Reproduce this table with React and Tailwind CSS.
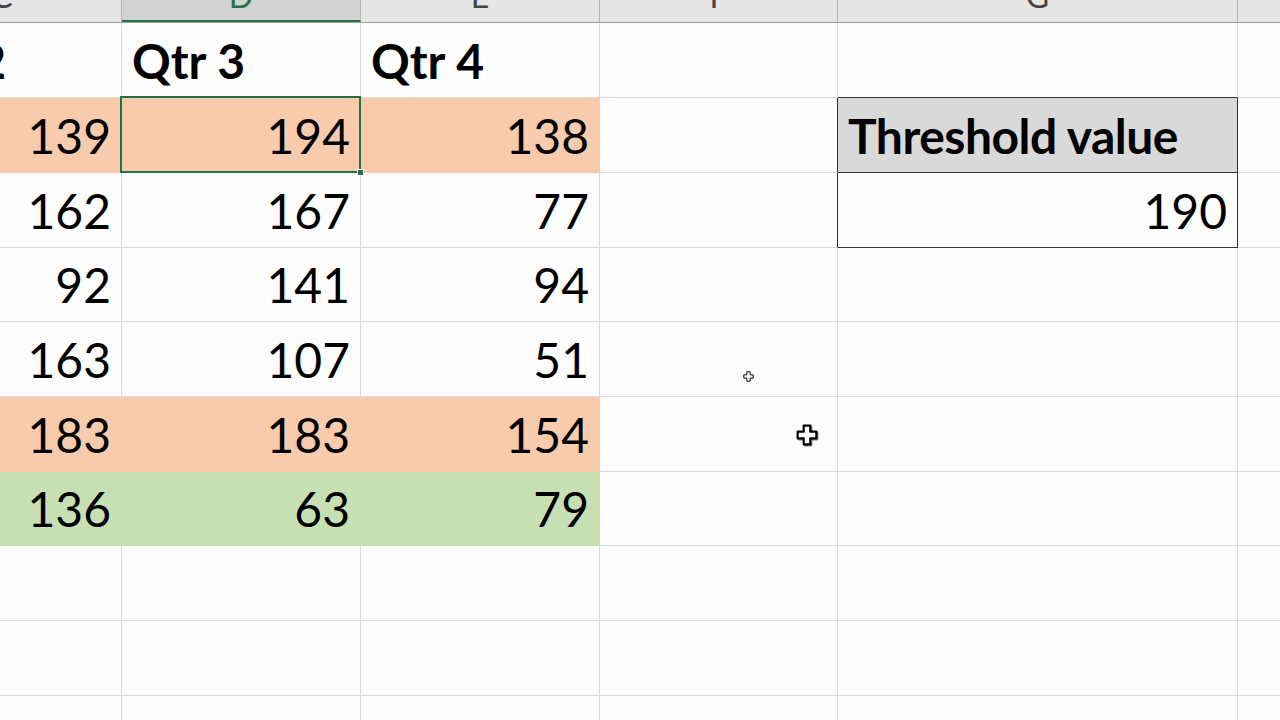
import React from 'react'

const cols = [
  { key: 'C', w: 'w-[239px]' },
  { key: 'D', w: 'w-[239px]' },
  { key: 'E', w: 'w-[239px]' },
  { key: 'F', w: 'w-[238px]' },
  { key: 'G', w: 'w-[400px]' },
  { key: 'H', w: 'w-[240px]' },
]

const rows = [
  { h: 'h-[75px]', vals: ['Qtr 2', 'Qtr 3', 'Qtr 4'], head: true },
  { h: 'h-[75px]', vals: [139, 194, 138], fill: 'bg-[#f8cbad] border-[#f8cbad]' },
  { h: 'h-[75px]', vals: [162, 167, 77] },
  { h: 'h-[74px]', vals: [92, 141, 94] },
  { h: 'h-[75px]', vals: [163, 107, 51] },
  { h: 'h-[75px]', vals: [183, 183, 154], fill: 'bg-[#f8cbad] border-[#f8cbad]' },
  { h: 'h-[74px]', vals: [136, 63, 79], fill: 'bg-[#c6e0b4] border-[#c6e0b4]' },
  { h: 'h-[75px]' },
  { h: 'h-[75px]' },
  { h: 'h-[75px]' },
  { h: 'h-[75px]' },
]

// the plus-shaped Excel cell cursor
const CellCursor = ({ size, stroke, className }) => (
  <svg width={size} height={size} viewBox="0 0 20 20" className={className}>
    <path
      d="M7 1.5 H13 V7 H18.5 V13 H13 V18.5 H7 V13 H1.5 V7 H7 Z"
      fill="#fff"
      stroke="#000"
      strokeWidth={stroke}
      strokeLinejoin="round"
    />
  </svg>
)

const App = () => {
  return (
    <div className="relative w-[1280px] h-[720px] overflow-hidden bg-[#fdfdfd] font-['Lato','Liberation_Sans',sans-serif] text-black">
      <div className="-ml-[117px] flex flex-col">
        {/* column letters, cut at the top like the zoomed sheet */}
        <div className="flex h-[23px] border-b border-[#a0a0a0] bg-[#e6e6e6] overflow-hidden">
          {cols.map((c) => {
            const sel = c.key === 'D'
            return (
              <div
                key={c.key}
                className={`${c.w} shrink-0 h-full flex justify-center border-r border-[#b4b4b4] overflow-hidden ${
                  sel ? 'bg-[#d2d2d2] border-b-2 border-b-[#217346] text-[#217346]' : 'text-[#444]'
                }`}
              >
                <span className="-mt-[20px] text-[32px] leading-[32px]">{c.key}</span>
              </div>
            )
          })}
        </div>

        {rows.map((r, ri) => (
          <div key={ri} className={`flex ${r.h}`}>
            {cols.map((c, ci) => {
              const val = r.vals && ci < 3 ? r.vals[ci] : null
              const filled = r.fill && ci < 3
              const selected = ri === 1 && ci === 1
              let extra = 'border-[#dadada]'
              let justify = 'justify-end'
              let content = null

              if (filled) extra = r.fill
              if (c.key === 'F' && (ri === 1 || ri === 2)) extra = 'border-b-[#dadada] border-r-[#333]'
              if (c.key === 'G' && ri === 0) extra = 'border-r-[#dadada] border-b-[#333]'
              if (c.key === 'G' && ri === 1) {
                extra = 'border-[#333] bg-[#d9d9d9]'
                justify = 'justify-start'
                content = <span className="pl-[10px] text-[48px] leading-none font-bold tracking-[-0.5px]">Threshold value</span>
              }
              if (c.key === 'G' && ri === 2) {
                extra = 'border-[#333]'
                content = <span className="pr-[10px] text-[48px] leading-none">190</span>
              }

              if (val !== null) {
                if (r.head) justify = 'justify-start'
                content = r.head ? (
                  <span className="pl-[10px] text-[48px] leading-none font-bold">{val}</span>
                ) : (
                  <span className="pr-[10px] text-[48px] leading-none">{val}</span>
                )
              }

              return (
                <div
                  key={c.key}
                  className={`relative ${c.w} shrink-0 flex items-end pb-[12px] border-r border-b ${justify} ${extra} ${
                    selected ? 'z-10' : ''
                  }`}
                >
                  {content}
                  {selected && (
                    <>
                      <div className="absolute -top-[2px] -left-[2px] -right-[1px] -bottom-[1px] border-2 border-[#217346] pointer-events-none" />
                      <div className="absolute -right-[4px] -bottom-[4px] w-[7px] h-[7px] bg-[#217346] border border-white" />
                    </>
                  )}
                </div>
              )
            })}
          </div>
        ))}
      </div>

      <CellCursor size={11} stroke={1.8} className="absolute left-[743px] top-[371px]" />
      <CellCursor size={22} stroke={2} className="absolute left-[796px] top-[424px] drop-shadow-[1px_1px_0_rgba(0,0,0,0.5)]" />
    </div>
  )
}

export default App
